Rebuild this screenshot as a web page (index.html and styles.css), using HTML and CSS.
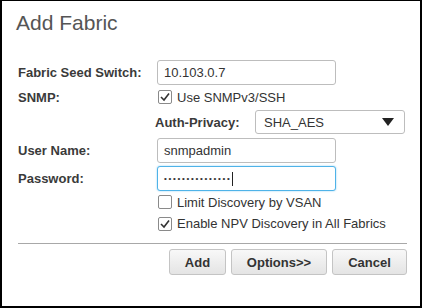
FILE: index.html
```html
<!DOCTYPE html>
<html>
<head>
<meta charset="utf-8">
<link rel="stylesheet" href="styles.css">
</head>
<body>
<div class="dialog">
  <h1 class="title">Add Fabric</h1>
  <div class="form">
    <div class="row row-input">
      <div class="label">Fabric Seed Switch:</div>
      <div class="field">10.103.0.7</div>
    </div>
    <div class="row row-check">
      <div class="label">SNMP:</div>
      <div class="check">
        <span class="box"><svg viewBox="0 0 14 14" width="14" height="14"><polyline points="3,7 6,10 11,3.5" fill="none" stroke="#333" stroke-width="1.6"/></svg></span>
        <span>Use SNMPv3/SSH</span>
      </div>
    </div>
    <div class="row row-select">
      <div class="label"></div>
      <div class="sublabel">Auth-Privacy:</div>
      <div class="select"><span>SHA_AES</span><svg class="caret" viewBox="0 0 12 8" width="12" height="8"><polygon points="0,0 12,0 6,8" fill="#222"/></svg></div>
    </div>
    <div class="row row-input2">
      <div class="label">User Name:</div>
      <div class="field">snmpadmin</div>
    </div>
    <div class="row row-input3">
      <div class="label">Password:</div>
      <div class="field focus"><span class="dots">•••••••••••••••</span><span class="cursor"></span></div>
    </div>
    <div class="row row-check2">
      <div class="label"></div>
      <div class="check">
        <span class="box"></span>
        <span>Limit Discovery by VSAN</span>
      </div>
    </div>
    <div class="row row-check3">
      <div class="label"></div>
      <div class="check">
        <span class="box"><svg viewBox="0 0 14 14" width="14" height="14"><polyline points="3,7 6,10 11,3.5" fill="none" stroke="#333" stroke-width="1.6"/></svg></span>
        <span>Enable NPV Discovery in All Fabrics</span>
      </div>
    </div>
  </div>
  <div class="sep"></div>
  <div class="buttons">
    <button class="btn btn-add">Add</button>
    <button class="btn btn-opt">Options&gt;&gt;</button>
    <button class="btn btn-cancel">Cancel</button>
  </div>
</div>
</body>
</html>
```

FILE: styles.css
```css
html, body {
  margin: 0;
  padding: 0;
  background: #fff;
}
body {
  width: 422px;
  height: 308px;
  box-sizing: border-box;
  border: 2px solid #000;
  border-top-width: 1px;
  font-family: "Liberation Sans", Arial, sans-serif;
  font-size: 13px;
  color: #333;
  overflow: hidden;
}
.dialog {
  padding: 9px 13px 0 14px;
}
.title {
  margin: 0;
  font-size: 21px;
  font-weight: normal;
  line-height: 26px;
  color: #555;
}
.form {
  margin-top: 24px;
  display: flex;
  flex-direction: column;
}
.row {
  display: flex;
  align-items: center;
}
.label {
  width: 141px;
  padding-left: 2px;
  box-sizing: border-box;
  font-weight: bold;
  color: #3a3a3a;
  flex: none;
}
.field {
  width: 179px;
  height: 25px;
  box-sizing: border-box;
  border: 1px solid #bdbdbd;
  border-radius: 3px;
  padding: 0 6px;
  display: flex;
  align-items: center;
  color: #333;
  background: #fff;
}
.field.focus {
  border-color: #4fb3e8;
  box-shadow: 0 0 2px #8ccff2;
}
.dots {
  font-size: 8px;
  letter-spacing: 1.7px;
  color: #333;
}
.cursor {
  display: inline-block;
  width: 1px;
  height: 14px;
  background: #222;
  margin-left: 0;
}
.row-check {
  height: 22px;
  margin-top: 1px;
}
.check {
  display: flex;
  align-items: center;
  gap: 5px;
  margin-left: 1px;
}
.box {
  width: 14px;
  height: 14px;
  box-sizing: border-box;
  border: 1px solid #8a8a8a;
  border-radius: 2px;
  background: #fff;
  display: flex;
  align-items: center;
  justify-content: center;
  overflow: hidden;
}
.box svg {
  flex: none;
}
.row-select {
  margin-top: 2px;
  height: 24px;
}
.sublabel {
  font-weight: bold;
  color: #3a3a3a;
  width: 100px;
  flex: none;
  margin-left: -2px;
}
.select {
  width: 150px;
  height: 24px;
  box-sizing: border-box;
  border: 1px solid #bdbdbd;
  border-radius: 3px;
  display: flex;
  align-items: center;
  justify-content: space-between;
  padding: 0 10px 0 8px;
  color: #333;
}
.row-input2 {
  margin-top: 4px;
}
.row-input3 {
  margin-top: 3px;
}
.row-check2 {
  height: 20px;
  margin-top: 1px;
}
.row-check3 {
  height: 23px;
  margin-top: 0;
}
.sep {
  margin-top: 8px;
  margin-left: 2px;
  height: 1px;
  background: #a8a8a8;
}
.buttons {
  display: flex;
  justify-content: flex-end;
  gap: 5px;
  margin-top: 5px;
}
.btn {
  height: 26px;
  box-sizing: border-box;
  border: 1px solid #c4c4c4;
  border-radius: 3px;
  background: linear-gradient(#f8f8f8, #e4e4e4);
  font-family: "Liberation Sans", Arial, sans-serif;
  font-size: 13px;
  font-weight: bold;
  color: #333;
  padding: 0;
}
.btn-add { width: 57px; }
.btn-opt { width: 96px; }
.btn-cancel { width: 75px; }
```
